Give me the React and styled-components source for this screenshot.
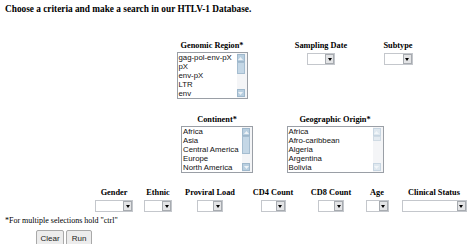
import React from "react";
import styled, { createGlobalStyle } from "styled-components";

const Global = createGlobalStyle`
  html, body { margin: 0; padding: 0; background: #fff; }
  body { width: 474px; height: 244px; overflow: hidden; font-family: "Liberation Serif", serif; color: #000; }
`;

const Page = styled.div`
  display: flex;
  flex-direction: column;
  padding: 4px 0 0 5px;
`;

const Title = styled.div`
  font-weight: bold;
  font-size: 9.3px;
  line-height: 11px;
  white-space: nowrap;
`;

const Row = styled.div`
  display: flex;
  align-items: flex-start;
  margin-top: ${(p) => p.$top}px;
  padding-left: ${(p) => p.$left}px;
`;

const Cell = styled.div`
  width: ${(p) => p.$w}px;
  flex: none;
  display: flex;
  flex-direction: column;
  align-items: center;
`;

const Label = styled.div`
  font-weight: bold;
  font-size: 8.3px;
  line-height: 10px;
  white-space: nowrap;
  margin-bottom: ${(p) => p.$mb ?? 1}px;
`;

const ListBox = styled.div`
  width: ${(p) => p.$w}px;
  height: 47px;
  box-sizing: border-box;
  border: 1px solid #9a9fa6;
  display: flex;
  background: #fff;
`;

const Items = styled.div`
  flex: 1;
  overflow: hidden;
  font-family: "Liberation Sans", Arial, sans-serif;
  font-size: 7.8px;
  line-height: 9px;
  padding-left: 1px;
  color: #111;
`;

const Item = styled.div`
  white-space: nowrap;
`;

const ScrollBar = styled.div`
  width: 9px;
  display: flex;
  flex-direction: column;
  justify-content: space-between;
  background: #f4f5f7;
  padding: 1px 1px 1px 0;
  position: relative;
`;

const ScrollBtn = styled.div`
  width: 8px;
  height: 8px;
  box-sizing: border-box;
  background: ${(p) => (p.$pale ? "#dfe8ef" : "#b9cfe0")};
  border: 1px solid ${(p) => (p.$pale ? "#c8d6e2" : "#9fb8cc")};
  display: flex;
  align-items: center;
  justify-content: center;
`;

const Thumb = styled.div`
  position: absolute;
  left: 0;
  width: 8px;
  top: ${(p) => p.$top}px;
  height: ${(p) => p.$h}px;
  box-sizing: border-box;
  background: ${(p) => (p.$pale ? "#e4ebf1" : "#c4d7e6")};
  border: 1px solid ${(p) => (p.$pale ? "#d0dbe4" : "#a5bdd0")};
`;

const Arrow = ({ up, color = "#fff" }) => (
  <svg width="5" height="3" viewBox="0 0 5 3">
    <path d={up ? "M0 3 L2.5 0 L5 3 Z" : "M0 0 L2.5 3 L5 0 Z"} fill={color} />
  </svg>
);

const List = ({ w, items, thumbTop = 9, thumbH = 14, pale }) => (
  <ListBox $w={w}>
    <Items>
      {items.map((t) => (
        <Item key={t}>{t}</Item>
      ))}
    </Items>
    <ScrollBar>
      <ScrollBtn $pale={pale}>
        <Arrow up color={pale ? "#f2f6f9" : "#eef3f7"} />
      </ScrollBtn>
      <Thumb $top={thumbTop} $h={thumbH} $pale={pale} />
      <ScrollBtn $pale={pale}>
        <Arrow color={pale ? "#f2f6f9" : "#eef3f7"} />
      </ScrollBtn>
    </ScrollBar>
  </ListBox>
);

const SelectBox = styled.div`
  width: ${(p) => p.$w}px;
  height: 12px;
  box-sizing: border-box;
  border: 1px solid #c4c7cc;
  display: flex;
  justify-content: flex-end;
  background: #fff;
`;

const SelectBtn = styled.div`
  width: 9px;
  height: 10px;
  box-sizing: border-box;
  border: 1px solid #a7abb0;
  background: #e3e4e6;
  display: flex;
  align-items: center;
  justify-content: center;
`;

const Select = ({ w }) => (
  <SelectBox $w={w}>
    <SelectBtn>
      <svg width="4" height="3" viewBox="0 0 4 3">
        <path d="M0 0 L4 0 L2 3 Z" fill="#000" />
      </svg>
    </SelectBtn>
  </SelectBox>
);

const Note = styled.div`
  font-size: 8px;
  line-height: 10px;
  margin-top: 4px;
  white-space: nowrap;
`;

const Buttons = styled.div`
  display: flex;
  gap: 2px;
  margin-top: 4px;
  padding-left: 31px;
`;

const Button = styled.button`
  font-family: "Liberation Sans", Arial, sans-serif;
  font-size: 8px;
  height: 16px;
  width: ${(p) => p.$w}px;
  padding: 0;
  background: #ececec;
  border: 1px solid #a9a9a9;
  border-radius: 2px;
  color: #222;
`;

export default function App() {
  return (
    <>
      <Global />
      <Page>
        <Title>Choose a criteria and make a search in our HTLV-1 Database.</Title>
        <Row $top={26} $left={165}>
          <Cell $w={84}>
            <Label>Genomic Region*</Label>
            <List w={71} items={["gag-pol-env-pX", "pX", "env-pX", "LTR", "env"]} thumbTop={9} thumbH={12} />
          </Cell>
          <Cell $w={70} style={{ marginLeft: 32 }}>
            <Label $mb={2}>Sampling Date</Label>
            <Select w={28} />
          </Cell>
          <Cell $w={40} style={{ marginLeft: 22 }}>
            <Label $mb={2}>Subtype</Label>
            <Select w={29} />
          </Cell>
        </Row>
        <Row $top={16} $left={171}>
          <Cell $w={82}>
            <Label>Continent*</Label>
            <List w={72} items={["Africa", "Asia", "Central America", "Europe", "North America"]} thumbTop={9} thumbH={18} />
          </Cell>
          <Cell $w={110} style={{ marginLeft: 22 }}>
            <Label>Geographic Origin*</Label>
            <List w={97} items={["Africa", "Afro-caribbean", "Algeria", "Argentina", "Bolivia"]} thumbTop={9} thumbH={5} pale />
          </Cell>
        </Row>
        <Row $top={15} $left={87}>
          <Cell $w={44}>
            <Label $mb={2}>Gender</Label>
            <Select w={38} />
          </Cell>
          <Cell $w={44}>
            <Label $mb={2}>Ethnic</Label>
            <Select w={28} />
          </Cell>
          <Cell $w={60}>
            <Label $mb={2}>Proviral Load</Label>
            <Select w={26} />
          </Cell>
          <Cell $w={66}>
            <Label $mb={2}>CD4 Count</Label>
            <Select w={25} />
          </Cell>
          <Cell $w={50}>
            <Label $mb={2}>CD8 Count</Label>
            <Select w={26} />
          </Cell>
          <Cell $w={42}>
            <Label $mb={2}>Age</Label>
            <Select w={23} />
          </Cell>
          <Cell $w={72}>
            <Label $mb={2}>Clinical Status</Label>
            <Select w={65} />
          </Cell>
        </Row>
        <Note>*For multiple selections hold "ctrl"</Note>
        <Buttons>
          <Button $w={28}>Clear</Button>
          <Button $w={26}>Run</Button>
        </Buttons>
      </Page>
    </>
  );
}
